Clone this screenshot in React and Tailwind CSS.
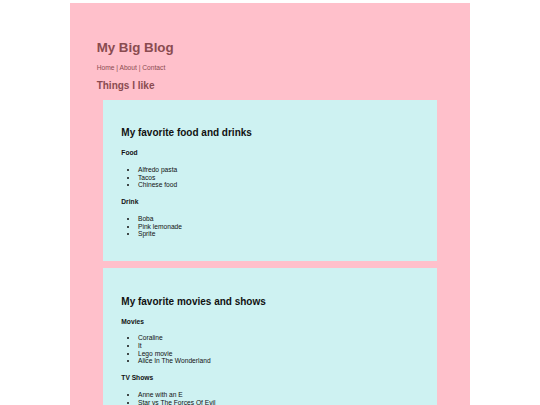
import React from 'react';

const sections = [
    {
        title: 'My favorite food and drinks',
        groups: [
            { name: 'Food', items: ['Alfredo pasta', 'Tacos', 'Chinese food'] },
            { name: 'Drink', items: ['Boba', 'Pink lemonade', 'Sprite'] },
        ],
    },
    {
        title: 'My favorite movies and shows',
        groups: [
            { name: 'Movies', items: ['Coraline', 'It', 'Lego movie', 'Alice In The Wonderland'] },
            { name: 'TV Shows', items: ['Anne with an E', 'Star vs The Forces Of Evil'] },
        ],
    },
];

function Card({ title, groups }) {
    return (
        <div className="flex flex-col bg-[#cef2f2] mx-[6.67px] px-[18px] pt-[27.5px] pb-[23.3px] text-[#111]">
            <h2 className="text-[10px] font-bold leading-[1.15]">{title}</h2>
            {groups.map((group, i) => (
                <div key={group.name} className={`flex flex-col ${i === 0 ? 'mt-[10.4px]' : 'mt-[9.5px]'}`}>
                    <h4 className="text-[6.67px] font-bold leading-[1.15]">{group.name}</h4>
                    <ul className="list-disc pl-[16.67px] mt-[8.9px] text-[6.67px] leading-[1.15]">
                        {group.items.map((item) => (
                            <li key={item}>{item}</li>
                        ))}
                    </ul>
                </div>
            ))}
        </div>
    );
}

export default function App() {
    return (
        <div className="min-h-screen bg-white pt-[3.33px] font-['Liberation_Sans',Arial,sans-serif]">
            <div className="flex flex-col w-[400px] mx-auto bg-[#ffc0cb] px-[26.67px] pt-[26.67px] pb-[26.67px]">
                {/* Header */}
                <h1 className="text-[13.33px] font-bold leading-[1.15] mt-[10.3px] text-[#8a4b50]">My Big Blog</h1>
                <p className="text-[6.67px] leading-[1.15] mt-[8.5px] text-[#8a4b50]">Home | About | Contact</p>
                <h2 className="text-[10px] font-bold leading-[1.15] mt-[8.4px] text-[#8a4b50]">Things I like</h2>

                <div className="flex flex-col gap-[7px] mt-[8.25px]">
                    {sections.map((section) => (
                        <Card key={section.title} title={section.title} groups={section.groups} />
                    ))}
                </div>
            </div>
        </div>
    );
}
